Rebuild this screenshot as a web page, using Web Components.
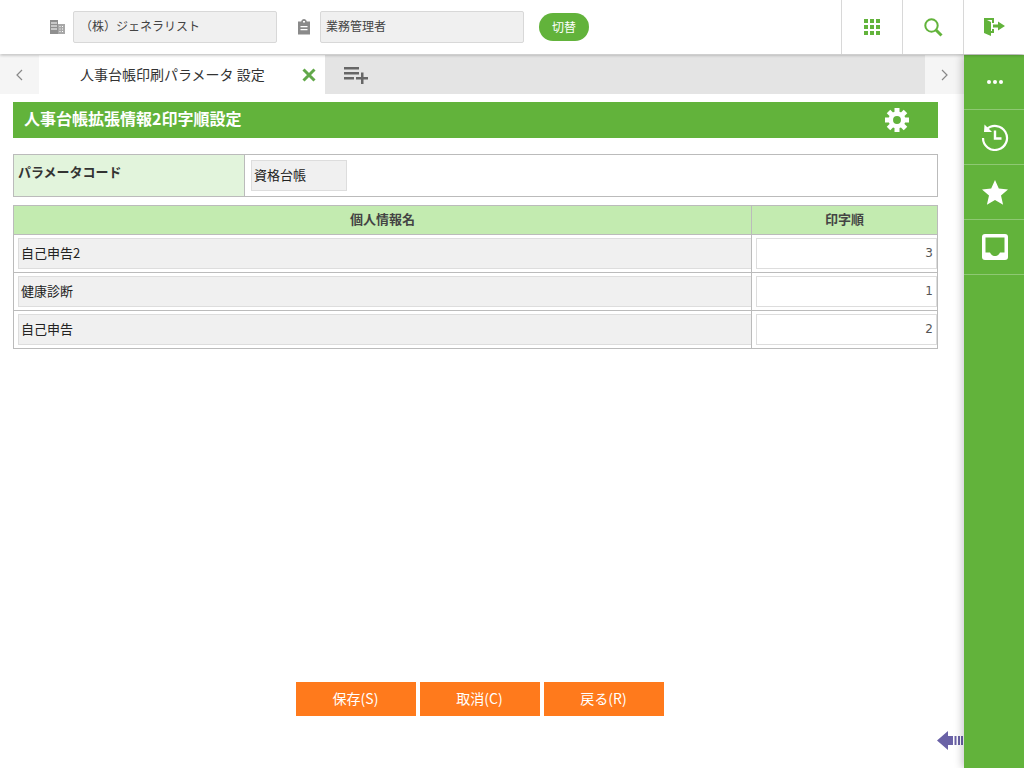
<!DOCTYPE html>
<html lang="ja">
<head>
<meta charset="utf-8">
<title>人事台帳拡張情報2印字順設定</title>
<style>
html, body { margin: 0; height: 100%; }
body { font-family: "Noto Sans CJK JP", "Liberation Sans", sans-serif; color: #333; overflow: hidden; }
</style>
</head>
<body>
<app-shell></app-shell>

<script>
const GREEN = '#62b33b';

class AppHeader extends HTMLElement {
    constructor() {
        super();
        this.attachShadow({ mode: 'open' }).innerHTML = `
            <style>
                :host { display: flex; align-items: center; height: 54px; background: #fff; box-shadow: 0 1px 3px rgba(0,0,0,.3); position: relative; z-index: 3; }
                .ctx { display: flex; align-items: center; padding-left: 49px; flex: 1; }
                svg { display: block; }
                .field { box-sizing: border-box; width: 204px; height: 32px; line-height: 28px; background: #f0f0f0; border: 1px solid #d8d8d8; border-radius: 2px; font-size: 12px; color: #444; }
                .company { margin-left: 7px; padding-left: 6px; }
                .role { margin-left: 9px; padding-left: 5px; }
                .role-icon { margin-left: 20px; }
                button { margin-left: 15px; width: 50px; height: 28px; border: 0; border-radius: 14px; background: ${GREEN}; color: #fff; font: inherit; font-size: 12px; padding: 0 0 2px; }
                .cell { box-sizing: border-box; width: 61px; height: 54px; border-left: 1px solid #d8d8d8; display: flex; align-items: center; justify-content: center; }
            </style>
            <div class="ctx">
                <svg width="17" height="16" viewBox="0 0 17 16"><path fill="#8f8f8f" d="M1 1h8v14H1z"/><path fill="#fff" d="M2 3.500h6v1H2zM2 6.500h6v1H2zM2 9.500h6v1H2z"/><path fill="#a8a8a8" d="M9 5h7v10H9z"/><path fill="#fff" d="M10.500 7h1v1h-1zM13 7h1v1h-1zM10.500 9.500h1v1h-1zM13 9.500h1v1h-1zM10.500 12h1v1h-1zM13 12h1v1h-1z"/></svg>
                <div class="field company">（株）ジェネラリスト</div>
                <svg class="role-icon" width="14" height="16" viewBox="0 0 14 16"><path fill="#8a8a8a" d="M1 2.500h3.200C4.500 1 5.600 0 7 0s2.500 1 2.800 2.500H13V15.500H1z"/><path fill="#fff" d="M3.500 7h7v1.300h-7zM3.500 10h7v1.300h-7zM6 2h2v1.500H6z"/></svg>
                <div class="field role">業務管理者</div>
                <button>切替</button>
            </div>
            <div class="cell">
                <svg width="16" height="16" viewBox="0 0 16 16" fill="${GREEN}"><path d="M0 0h4v4H0zM6 0h4v4H6zM12 0h4v4h-4zM0 6h4v4H0zM6 6h4v4H6zM12 6h4v4h-4zM0 12h4v4H0zM6 12h4v4H6zM12 12h4v4h-4z"/></svg>
            </div>
            <div class="cell">
                <svg width="19" height="19" viewBox="0 0 19 19" fill="none" stroke="${GREEN}"><circle cx="7.500" cy="7.500" r="6.200" stroke-width="2"/><path d="M12 12l5.500 5.500" stroke-width="3"/></svg>
            </div>
            <div class="cell">
                <svg width="21" height="18" viewBox="0 0 21 18" fill="${GREEN}"><path d="M0 0H10V5H8V2H3L7 4V13H8V11H10V15H7V18L0 15z"/><path d="M9 6.500H14V3.500L21 8 14 12.500V9.500H9z"/></svg>
            </div>
        `;
    }
}

class TabBar extends HTMLElement {
    constructor() {
        super();
        this.attachShadow({ mode: 'open' }).innerHTML = `
            <style>
                :host { display: flex; height: 39px; background: #e4e4e4; }
                .nav { width: 39px; background: #f5f5f5; display: flex; align-items: center; justify-content: center; }
                .nav.next { margin-left: auto; }
                .tab { box-sizing: border-box; width: 286px; background: #fff; display: flex; align-items: center; padding-left: 41px; font-size: 14px; color: #333; }
                .tab span { width: 222px; white-space: nowrap; position: relative; top: -1px; }
                .add { margin-left: 19px; align-self: center; display: block; }
            </style>
            <div class="nav">
                <svg width="7" height="12" viewBox="0 0 7 12" fill="none" stroke="#888" stroke-width="1.200"><path d="M6 1L1 6l5 5"/></svg>
            </div>
            <div class="tab">
                <span>人事台帳印刷パラメータ 設定</span>
                <svg width="14" height="14" viewBox="0 0 14 14" fill="none" stroke="#62a84a" stroke-width="3"><path d="M1.500 1.500l11 11M12.500 1.500l-11 11"/></svg>
            </div>
            <svg class="add" width="24" height="18" viewBox="0 0 24 18" fill="#666"><path d="M0 1h15v2.500H0zM0 6h15v2.500H0zM0 11h10v2.500H0zM12 11h5V6.500h2.500V11H24v2.500h-4.500V18H17v-4.500h-5z"/></svg>
            <div class="nav next">
                <svg width="7" height="12" viewBox="0 0 7 12" fill="none" stroke="#888" stroke-width="1.200"><path d="M1 1l5 5-5 5"/></svg>
            </div>
        `;
    }
}

class SideRail extends HTMLElement {
    constructor() {
        super();
        this.attachShadow({ mode: 'open' }).innerHTML = `
            <style>
                :host { display: block; width: 60px; background: ${GREEN}; box-shadow: -2px 0 8px rgba(0,0,0,.22); position: relative; z-index: 2; flex: none; }
                .item { box-sizing: border-box; height: 55px; padding-left: 2px; border-bottom: 1px solid #8ec873; display: flex; align-items: center; justify-content: center; }
                svg { display: block; }
            </style>
            <div class="item">
                <svg width="16" height="4" viewBox="0 0 16 4" fill="#fff"><circle cx="2" cy="2" r="2"/><circle cx="8" cy="2" r="2"/><circle cx="14" cy="2" r="2"/></svg>
            </div>
            <div class="item">
                <svg width="28" height="28" viewBox="0 0 28 28" fill="none" stroke="#fff" stroke-width="2.200"><path d="M5.500 6.500A12 12 0 1 1 2 15"/><path fill="#fff" stroke="none" d="M3.500 1.500L11 9H3z"/><path d="M14 7.500V15.500h6.500" stroke-width="2.400"/></svg>
            </div>
            <div class="item">
                <svg width="26" height="25" viewBox="0 0 26 25" fill="#fff"><path d="M13 0l3.800 8.600 9.200.9-7 6.100 2.100 9.200L13 20l-8.100 4.800L7 15.600 0 9.500l9.200-.9z"/></svg>
            </div>
            <div class="item">
                <svg width="26" height="26" viewBox="0 0 26 26"><rect width="26" height="26" rx="3" fill="#fff"/><path fill="${GREEN}" d="M3.500 3.500h19v15H18c-1 2.500-3 3.500-5 3.500s-4-1-5-3.500H3.500z"/></svg>
            </div>
        `;
    }
}

class TitleBar extends HTMLElement {
    constructor() {
        super();
        const teeth = [0, 45, 90, 135, 180, 225, 270, 315]
            .map(a => `<rect x="9.500" y="0" width="5" height="6" transform="rotate(${a} 12 12)"/>`).join('');
        this.attachShadow({ mode: 'open' }).innerHTML = `
            <style>
                :host { display: flex; align-items: center; justify-content: space-between; height: 36px; background: ${GREEN}; color: #fff; padding: 0 29px 0 11px; font-weight: 700; font-size: 16px; }
                .label { position: relative; top: -2px; }
                svg { display: block; }
            </style>
            <span class="label"><slot></slot></span>
            <svg width="24" height="24" viewBox="0 0 24 24" fill="#fff">${teeth}<circle cx="12" cy="12" r="6.200" fill="none" stroke="#fff" stroke-width="4.500"/></svg>
        `;
    }
}

class ParamRow extends HTMLElement {
    constructor() {
        super();
        this.attachShadow({ mode: 'open' }).innerHTML = `
            <style>
                :host { display: grid; grid-template-columns: 231px 1fr; height: 43px; box-sizing: border-box; border: 1px solid #bbb; margin-top: 16px; }
                .key { background: #e2f4dc; border-right: 1px solid #bbb; font-size: 13px; font-weight: 700; color: #333; padding: 7px 0 0 4px; }
                .val { padding: 5px 0 0 6px; }
                .box { box-sizing: border-box; width: 96px; height: 31px; line-height: 27px; background: #f0f0f0; border: 1px solid #ddd; font-size: 13px; padding-left: 2px; color: #222; }
            </style>
            <div class="key">${this.getAttribute('label')}</div>
            <div class="val"><div class="box"><slot></slot></div></div>
        `;
    }
}

class OrderTable extends HTMLElement {
    constructor() {
        super();
        const rows = [['自己申告2', 3], ['健康診断', 1], ['自己申告', 2]];
        this.attachShadow({ mode: 'open' }).innerHTML = `
            <style>
                :host { display: grid; grid-template-columns: 737px 1fr; box-sizing: border-box; margin-top: 8px; border: 1px solid #bbb; border-bottom: 0; font-size: 13px; color: #222; }
                .th { box-sizing: border-box; height: 29px; line-height: 26px; background: #c3ebb0; text-align: center; font-weight: 700; font-size: 13px; color: #444; border-bottom: 1px solid #bbb; }
                .td { box-sizing: border-box; height: 38px; border-bottom: 1px solid #bbb; padding-top: 3px; }
                .right { border-left: 1px solid #bbb; }
                .name { box-sizing: border-box; height: 31px; margin-left: 4px; line-height: 27px; background: #f0f0f0; border: 1px solid #ddd; border-right: 0; padding-left: 2px; }
                .num { box-sizing: border-box; height: 31px; margin: 0 0 0 4px; line-height: 29px; background: #fff; border: 1px solid #ddd; text-align: right; padding-right: 3px; font-family: "DejaVu Sans", sans-serif; font-size: 12px; color: #555; }
            </style>
            <div class="th">個人情報名</div>
            <div class="th right">印字順</div>
            ${rows.map(([name, order]) => `
                <div class="td"><div class="name">${name}</div></div>
                <div class="td right"><div class="num">${order}</div></div>
            `).join('')}
        `;
    }
}

class ActionButtons extends HTMLElement {
    constructor() {
        super();
        this.attachShadow({ mode: 'open' }).innerHTML = `
            <style>
                :host { display: flex; justify-content: center; gap: 4px; margin-top: auto; padding: 0 0 52px 8px; }
                button { width: 120px; height: 34px; border: 0; padding: 0 0 3px; background: #ff7a1c; color: #fff; font: inherit; font-size: 14px; }
            </style>
            <button>保存(S)</button>
            <button>取消(C)</button>
            <button>戻る(R)</button>
        `;
    }
}

class AppShell extends HTMLElement {
    constructor() {
        super();
        this.attachShadow({ mode: 'open' }).innerHTML = `
            <style>
                :host { display: flex; flex-direction: column; height: 768px; position: relative; }
                .body { flex: 1; display: flex; min-height: 0; padding-top: 1px; }
                .main { flex: 1; display: flex; flex-direction: column; min-width: 0; }
                .page { flex: 1; display: flex; flex-direction: column; padding: 8px 26px 0 13px; }
                .back { position: absolute; left: 937px; top: 730px; display: block; }
            </style>
            <app-header></app-header>
            <div class="body">
                <div class="main">
                    <tab-bar></tab-bar>
                    <div class="page">
                        <title-bar>人事台帳拡張情報2印字順設定</title-bar>
                        <param-row label="パラメータコード">資格台帳</param-row>
                        <order-table></order-table>
                        <action-buttons></action-buttons>
                    </div>
                </div>
                <side-rail></side-rail>
            </div>
            <svg class="back" width="27" height="21" viewBox="0 0 27 21" fill="#6a62a6"><path d="M0 10.500L11 1v5h5v9h-5v5z"/><path d="M17.500 6h2v9h-2zM21 6h2v9h-2zM24 6h2v9h-2z"/></svg>
        `;
    }
}

customElements.define('app-header', AppHeader);
customElements.define('tab-bar', TabBar);
customElements.define('side-rail', SideRail);
customElements.define('title-bar', TitleBar);
customElements.define('param-row', ParamRow);
customElements.define('order-table', OrderTable);
customElements.define('action-buttons', ActionButtons);
customElements.define('app-shell', AppShell);
</script>
</body>
</html>
